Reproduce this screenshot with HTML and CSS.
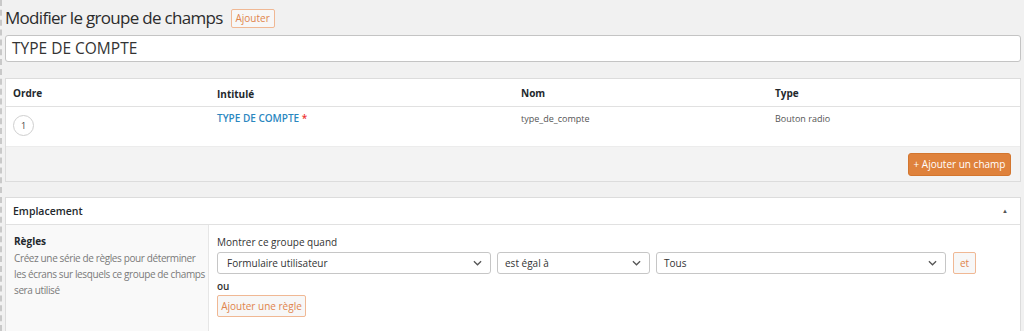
FILE: index.html
```html
<!DOCTYPE html>
<html lang="fr">
<head>
<meta charset="utf-8">
<link rel="stylesheet" href="styles.css">
</head>
<body>
<div class="page">
  <div class="title-row">
    <h1 class="title">Modifier le groupe de champs</h1>
    <button class="btn-outline btn-small">Ajouter</button>
  </div>
  <div class="title-input">TYPE DE COMPTE</div>

  <div class="box fields">
    <div class="row head">
      <div class="c-order">Ordre</div>
      <div class="c-label">Intitulé</div>
      <div class="c-name">Nom</div>
      <div class="c-type">Type</div>
    </div>
    <div class="row field">
      <div class="c-order"><span class="circle">1</span></div>
      <div class="c-label"><span class="link">TYPE DE COMPTE</span> <span class="req">*</span></div>
      <div class="c-name small">type_de_compte</div>
      <div class="c-type small">Bouton radio</div>
    </div>
    <div class="foot">
      <button class="btn-primary">+ Ajouter un champ</button>
    </div>
  </div>

  <div class="box location">
    <div class="loc-head">
      <span>Emplacement</span>
      <span class="toggle">&#9650;</span>
    </div>
    <div class="loc-body">
      <div class="loc-side">
        <div class="side-title">Règles</div>
        <p class="side-desc">Créez une série de règles pour déterminer les écrans sur lesquels ce groupe de champs sera utilisé</p>
      </div>
      <div class="loc-main">
        <div class="main-label">Montrer ce groupe quand</div>
        <div class="rule">
          <div class="select s1"><span>Formulaire utilisateur</span><svg class="chev" viewBox="0 0 10 6"><path d="M1 1l4 4 4-4" fill="none" stroke="#555" stroke-width="1.4"/></svg></div>
          <div class="select s2"><span>est égal à</span><svg class="chev" viewBox="0 0 10 6"><path d="M1 1l4 4 4-4" fill="none" stroke="#555" stroke-width="1.4"/></svg></div>
          <div class="select s3"><span>Tous</span><svg class="chev" viewBox="0 0 10 6"><path d="M1 1l4 4 4-4" fill="none" stroke="#555" stroke-width="1.4"/></svg></div>
          <button class="btn-outline btn-et">et</button>
        </div>
        <div class="ou">ou</div>
        <button class="btn-outline btn-rule">Ajouter une règle</button>
      </div>
    </div>
  </div>
</div>
</body>
</html>
```

FILE: styles.css
```css
* { box-sizing: border-box; }
html, body { margin: 0; padding: 0; }
body {
  background: #f1f1f1;
  font-family: "Open Sans", "Noto Sans", sans-serif;
  color: #444;
  width: 1024px;
  height: 331px;
  overflow: hidden;
}
.page {
  border-left: 2px dashed #c9c9c9;
  height: 331px;
  padding: 4px 4px 0 3px;
}
.title-row {
  display: flex;
  align-items: center;
  gap: 8px;
  height: 24px;
  margin-top: 2px;
}
.title {
  margin: 0;
  font-size: 17px;
  font-weight: 400;
  color: #2c2c2c;
  letter-spacing: -0.7px;
  line-height: 24px;
}
button { font-family: inherit; cursor: pointer; }
.btn-outline {
  background: #f7f7f7;
  border: 1px solid #f0b894;
  color: #e0844c;
  border-radius: 2px;
  padding: 0;
}
.btn-small {
  font-size: 10px;
  height: 19px;
  width: 44px;
}
.title-input {
  margin-top: 5px;
  height: 27px;
  width: 1016px;
  background: #fff;
  border: 1px solid #c4c4c4;
  border-radius: 3px;
  font-size: 15.5px;
  color: #333;
  line-height: 25px;
  padding-left: 6px;
}
.box {
  width: 1016px;
  background: #fff;
  border: 1px solid #dcdcdc;
}
.fields { margin-top: 16px; }
.row {
  display: flex;
  border-bottom: 1px solid #e1e1e1;
}
.row > div { padding-left: 7px; }
.c-order { width: 204px; }
.c-label { width: 304px; }
.c-name { width: 254px; }
.c-type { flex: 1; }
.head {
  height: 28px;
  align-items: center;
  font-size: 10px;
  font-weight: 700;
  color: #23282d;
}
.field {
  height: 39px;
  padding-top: 2px;
  align-items: flex-start;
  font-size: 10px;
  border-bottom: none;
}
.small { font-size: 9px; color: #555; padding-top: 3px; }
.circle {
  display: inline-flex;
  align-items: center;
  justify-content: center;
  width: 21px;
  height: 21px;
  border: 1px solid #cfcfcf;
  border-radius: 50%;
  font-size: 9px;
  color: #444;
  margin-left: 0;
  margin-top: 6px;
}
.c-label { padding-top: 2px; }
.link { color: #2b87bf; font-weight: 600; font-size: 10px; }
.req { color: #e33; font-weight: 600; }
.foot {
  background: #f3f3f3;
  border-top: 1px solid #ececec;
  height: 35px;
  display: flex;
  justify-content: flex-end;
  align-items: center;
  padding-right: 9px;
}
.btn-primary {
  background: #df823c;
  border: 1px solid #d3762f;
  color: #fff;
  font-size: 10px;
  height: 23px;
  width: 103px;
  border-radius: 3px;
  padding: 0;
}
.location { margin-top: 15px; }
.loc-head {
  height: 27px;
  border-bottom: 1px solid #e1e1e1;
  display: flex;
  justify-content: space-between;
  align-items: center;
  padding: 0 12px 0 7px;
  font-size: 10.5px;
  font-weight: 600;
  color: #23282d;
}
.toggle { font-size: 6px; color: #555; }
.loc-body { display: flex; height: 106px; }
.loc-side {
  width: 203px;
  background: #f9f9f9;
  border-right: 1px solid #e6e6e6;
  padding: 9px 0 0 8px;
}
.side-title { font-size: 10px; font-weight: 700; color: #23282d; line-height: 14px; }
.side-desc {
  margin: 2px 0 0;
  font-size: 10px;
  letter-spacing: -0.38px;
  line-height: 16px;
  color: #7a7a7a;
}
.loc-main { flex: 1; padding: 10px 0 0 8px; }
.main-label { font-size: 10px; color: #333; line-height: 14px; font-weight: 500; }
.rule { display: flex; gap: 6px; margin-top: 3px; align-items: center; }
.select {
  height: 22px;
  background: #fff;
  border: 1px solid #c6c6c6;
  border-radius: 3px;
  display: flex;
  justify-content: space-between;
  align-items: center;
  padding: 0 8px 0 7px;
  font-size: 10px;
  color: #333;
}
.chev { width: 9px; height: 6px; }
.s1 { width: 274px; padding-left: 9px; }
.s2 { width: 153px; }
.s3 { width: 290px; }
.btn-et {
  width: 23px;
  height: 22px;
  font-size: 10px;
  margin-left: 1px;
}
.ou { font-size: 10px; font-weight: 600; color: #333; margin-top: 5px; line-height: 14px; }
.btn-rule {
  margin-top: 2px;
  width: 89px;
  height: 22px;
  font-size: 10px;
}
```
